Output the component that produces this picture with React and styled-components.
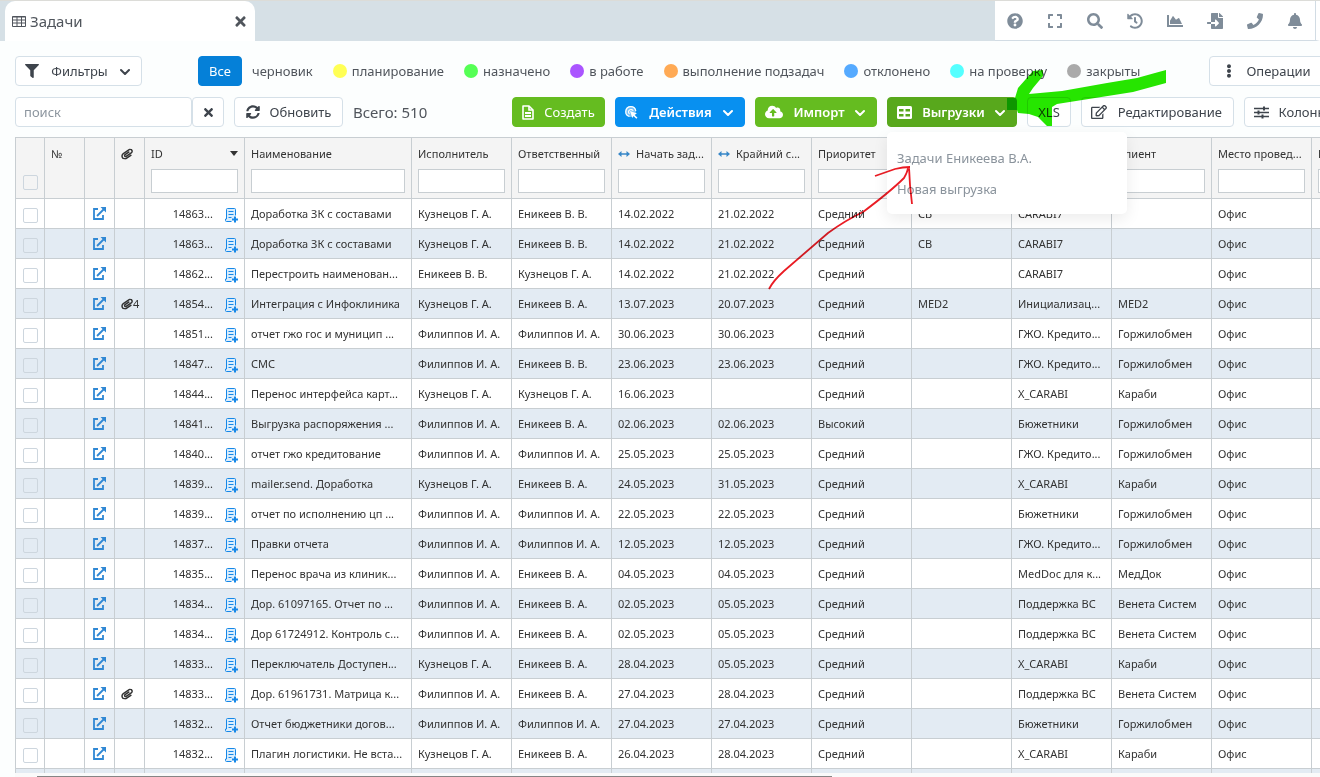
import React from "react";
import styled, { createGlobalStyle } from "styled-components";
import {
  FaTimes, FaFilter, FaSyncAlt, FaQuestionCircle, FaExpand, FaSearch,
  FaHistory, FaChartArea, FaFileImport, FaPhone, FaBell, FaEllipsisV,
  FaCloudUploadAlt, FaRegEdit, FaPaperclip,
} from "react-icons/fa";

const GlobalStyle = createGlobalStyle`
  * {
    box-sizing: border-box;
  }
  body {
    margin: 0;
    background: #fcfefe;
    color: #3e444c;
    font-family: "Noto Sans", "Open Sans", sans-serif;
    font-size: 13px;
  }
  button, input {
    font-family: inherit;
    font-size: inherit;
    color: inherit;
  }
  svg {
    flex: none;
  }
`;

const statuses = [
  { label: "планирование", color: "#ffff55" },
  { label: "назначено", color: "#55ff55" },
  { label: "в работе", color: "#aa55ff" },
  { label: "выполнение подзадач", color: "#ffaa55" },
  { label: "отклонено", color: "#55aaff" },
  { label: "на проверку", color: "#55ffff" },
  { label: "закрыты", color: "#aaaaaa" },
];

const columns = [
  { width: 29, kind: "check" },
  { width: 40, title: "№" },
  { width: 30 },
  { width: 30, kind: "clip" },
  { width: 100, title: "ID", filter: true, sorted: true },
  { width: 167, title: "Наименование", filter: true },
  { width: 100, title: "Исполнитель", filter: true },
  { width: 100, title: "Ответственный", filter: true },
  { width: 100, title: "Начать зад...", filter: true, arrows: true },
  { width: 100, title: "Крайний с...", filter: true, arrows: true },
  { width: 100, title: "Приоритет", filter: true },
  { width: 100, filter: true },
  { width: 100, filter: true },
  { width: 100, title: "Клиент", filter: true },
  { width: 100, title: "Место провед...", filter: true },
  { width: 100, title: "Инициатор", filter: true },
];

const K = "Кузнецов Г. А.";
const F = "Филиппов И. А.";
const EV = "Еникеев В. В.";
const EA = "Еникеев В. А.";
const MID = "Средний";

const rows = [
  ["14863...", "Доработка ЗК с составами", K, EV, "14.02.2022", "21.02.2022", MID, "СВ", "CARABI7", ""],
  ["14863...", "Доработка ЗК с составами", K, EV, "14.02.2022", "21.02.2022", MID, "СВ", "CARABI7", ""],
  ["14862...", "Перестроить наименован...", EV, K, "14.02.2022", "21.02.2022", MID, "", "CARABI7", ""],
  ["14854...", "Интеграция с Инфоклиника", K, EA, "13.07.2023", "20.07.2023", MID, "MED2", "Инициализац...", "MED2"],
  ["14851...", "отчет гжо гос и муницип ...", F, F, "30.06.2023", "30.06.2023", MID, "", "ГЖО. Кредито...", "Горжилобмен"],
  ["14847...", "СМС", F, EV, "23.06.2023", "23.06.2023", MID, "", "ГЖО. Кредито...", "Горжилобмен"],
  ["14844...", "Перенос интерфейса карт...", K, K, "16.06.2023", "", MID, "", "X_CARABI", "Караби"],
  ["14841...", "Выгрузка распоряжения ...", F, EA, "02.06.2023", "02.06.2023", "Высокий", "", "Бюжетники", "Горжилобмен"],
  ["14840...", "отчет гжо кредитование", F, F, "25.05.2023", "25.05.2023", MID, "", "ГЖО. Кредито...", "Горжилобмен"],
  ["14839...", "mailer.send. Доработка", K, EA, "24.05.2023", "31.05.2023", MID, "", "X_CARABI", "Караби"],
  ["14839...", "отчет по исполнению цп ...", F, F, "22.05.2023", "22.05.2023", MID, "", "Бюжетники", "Горжилобмен"],
  ["14837...", "Правки отчета", F, F, "12.05.2023", "12.05.2023", MID, "", "ГЖО. Кредито...", "Горжилобмен"],
  ["14835...", "Перенос врача из клиник...", F, EA, "04.05.2023", "04.05.2023", MID, "", "MedDoc для к...", "МедДок"],
  ["14834...", "Дор. 61097165. Отчет по ...", F, EA, "02.05.2023", "05.05.2023", MID, "", "Поддержка ВС", "Венета Систем"],
  ["14834...", "Дор 61724912. Контроль с...", F, EA, "02.05.2023", "05.05.2023", MID, "", "Поддержка ВС", "Венета Систем"],
  ["14833...", "Переключатель Доступен...", K, EA, "28.04.2023", "05.05.2023", MID, "", "X_CARABI", "Караби"],
  ["14833...", "Дор. 61961731. Матрица к...", F, EA, "27.04.2023", "28.04.2023", MID, "", "Поддержка ВС", "Венета Систем"],
  ["14832...", "Отчет бюджетники догов...", F, F, "27.04.2023", "27.04.2023", MID, "", "Бюжетники", "Горжилобмен"],
  ["14832...", "Плагин логистики. Не вста...", K, EA, "26.04.2023", "28.04.2023", MID, "", "X_CARABI", "Караби"],
];

const attachments = { 3: "4", 16: "" };

const Chevron = () => (
  <svg width="10" height="8" viewBox="0 0 10 8" fill="none" stroke="currentColor" strokeWidth="2">
    <path d="M1 3l4 4 4-4" strokeLinecap="round" strokeLinejoin="round" />
  </svg>
);

const TableIcon = () => (
  <svg width="14" height="11" viewBox="0 0 14 11" fill="none" stroke="currentColor">
    <path d="M.5 .5h13v10H.5z" />
    <path d="M.5 1h13M.5 4h13M.5 7h13M5 .5v10M9.500 .5v10" />
  </svg>
);

const DocIcon = () => (
  <svg width="12" height="15" viewBox="0 0 12 15" fill="none" stroke="currentColor" strokeWidth="1.600">
    <path d="M1 1h6l4 4v9H1z" strokeLinejoin="round" />
    <path d="M3 8h6M3 11h6" strokeWidth="2" />
    <path d="M7 1v4h4" />
  </svg>
);

const TargetIcon = () => (
  <svg width="13" height="13" viewBox="0 0 13 13" fill="none" stroke="currentColor">
    <circle cx="5.500" cy="5.500" r="5.500" fill="currentColor" fillOpacity="0.45" stroke="none" />
    <path d="M4.500 10.500A5 5 0 1 1 10.800 5" strokeWidth="1.200" />
    <path d="M4.500 8A2.500 2.500 0 1 1 8.200 4.800" strokeWidth="1.200" />
    <path d="M5 5l7 2.500-2.500 1.200 3 3-1.200 1-2.800-2.800L7.300 12z" fill="currentColor" stroke="none" />
  </svg>
);

const GridIcon = () => (
  <svg width="15" height="13" viewBox="0 0 15 13">
    <rect width="15" height="13" rx="1.500" fill="currentColor" />
    <path d="M2 3h4.500v2.500H2zM8.500 3H13v2.500H8.500zM2 8h4.500v2.500H2zM8.500 8H13v2.500H8.500z" fill="#58a81c" />
  </svg>
);

const SlidersIcon = () => (
  <svg width="15" height="13" viewBox="0 0 15 13" stroke="currentColor" fill="none">
    <path d="M0 2.500h15M0 6.500h15M0 10.500h15" strokeWidth="1.500" />
    <path d="M10 .5v4M4.500 4.500v4M8.500 8.500v4" strokeWidth="2" />
  </svg>
);

const OpenIcon = () => (
  <svg width="13" height="13" viewBox="0 0 13 13" fill="none" stroke="currentColor">
    <path d="M5 2H1v10h9V8" strokeWidth="1.800" />
    <path d="M4 9l7-7" strokeWidth="1.800" />
    <path d="M7.500 0H13v5.500z" fill="currentColor" stroke="none" />
  </svg>
);

const AddNoteIcon = () => (
  <svg width="13" height="15" viewBox="0 0 13 15" fill="none" stroke="currentColor">
    <path d="M10.500 7.500V1.500q0-1-1-1h-7q-1 0-1 1v9.500H.5v1.500q0 1 1 1h5" fill="#d9edfd" />
    <path d="M3.500 3.500h5M3.500 6.500h5M3.500 9.500h3" />
    <path d="M10 8.500v6M7 11.500h6" strokeWidth="2" />
  </svg>
);

const ArrowsIcon = () => (
  <svg width="12" height="8" viewBox="0 0 12 8" fill="#3787c8">
    <path d="M0 4l3.500-3v2.300h5V1L12 4 8.500 7V4.700h-5V7z" />
  </svg>
);

const Page = styled.div`
  position: relative;
  display: flex;
  flex-direction: column;
  height: 100vh;
  overflow: hidden;
`;

const TopBar = styled.header`
  display: flex;
  justify-content: space-between;
  height: 41px;
  padding-left: 5px;
  background: #d6e0e6;
  border-top: 1px solid #dcdcd8;
`;

const Tab = styled.div`
  display: flex;
  align-items: center;
  gap: 4px;
  width: 250px;
  padding: 0 8px 0 7px;
  background: #fff;
  border-radius: 10px 10px 0 0;
  font-size: 15px;
  color: #50555c;
  span {
    flex: 1;
  }
`;

const IconButton = styled.button`
  display: flex;
  align-items: center;
  justify-content: center;
  width: ${(p) => p.$width || 40}px;
  padding: 0;
  border: 0;
  background: none;
  color: ${(p) => p.$color || "#7f8c99"};
`;

const TopIcons = styled.nav`
  display: flex;
  background: #fff;
  border-bottom: 1px solid #d2dce4;
  border-right: 4px solid #fff;
  box-shadow: inset -1px 0 #d2dce4;
  padding-right: 1px;
`;

const StatusBar = styled.div`
  display: flex;
  align-items: center;
  height: 30px;
  margin-top: 15px;
  padding-left: 15px;
  white-space: nowrap;
`;

const ToolBar = styled(StatusBar)`
  margin-top: 11px;
`;

const Button = styled.button`
  display: flex;
  flex: none;
  align-items: center;
  justify-content: ${(p) => (p.$spread ? "space-between" : "center")};
  gap: 10px;
  width: ${(p) => p.$width}px;
  height: 30px;
  margin-right: ${(p) => p.$after || 0}px;
  padding: ${(p) => (p.$spread ? "0 11px 0 9px" : 0)};
  border: 1px solid ${(p) => p.$bg || "#d5e0e8"};
  border-radius: 4px;
  background: ${(p) => p.$bg || "#fff"};
  color: ${(p) => (p.$bg ? "#fff" : "#3e444c")};
  font-weight: ${(p) => (p.$strong ? 600 : 400)};
  white-space: nowrap;
`;

const StatusList = styled.div`
  display: flex;
  gap: 20px;
  margin-left: 10px;
`;

const Status = styled.a`
  display: flex;
  align-items: center;
  gap: 5px;
  color: #50555c;
  text-decoration: none;
`;

const Dot = styled.i`
  width: 14px;
  height: 14px;
  border-radius: 50%;
  background: ${(p) => p.$color};
`;

const PushRight = styled.div`
  margin-left: auto;
  margin-right: -${(p) => p.$over}px;
`;

const Search = styled.input`
  width: 177px;
  height: 30px;
  padding: 0 8px;
  border: 1px solid #d5e0e8;
  border-radius: 4px;
  background: #fff;
  &::placeholder {
    color: #8c959e;
    opacity: 1;
  }
`;

const Total = styled.span`
  flex: 1;
  font-size: 15px;
  color: #50555c;
`;

const MenuAnchor = styled.div`
  position: relative;
  margin-right: 10px;
`;

const Menu = styled.div`
  position: absolute;
  z-index: 2;
  top: 35px;
  left: 0;
  display: flex;
  flex-direction: column;
  width: 240px;
  padding: 11px 0 9px;
  border-radius: 5px;
  background: #fff;
  box-shadow: 0 5px 15px rgba(0, 0, 0, 0.08);
`;

const MenuItem = styled.a`
  padding: 0 10px;
  line-height: 31px;
  color: #8a939c;
  text-decoration: none;
`;

const TableWrap = styled.div`
  flex: 1;
  min-height: 0;
  margin: 10px 0 0 15px;
  overflow: hidden;
`;

const Table = styled.table`
  width: 1397px;
  table-layout: fixed;
  border-collapse: separate;
  border-spacing: 0;
  border-top: 1px solid #c8ced2;
  border-left: 1px solid #c8ced2;
  font-size: 11px;
  color: #333;
  th,
  td {
    padding: 0 6px;
    border-right: 1px solid #c8ced2;
    border-bottom: 1px solid #c8ced2;
    overflow: hidden;
    white-space: nowrap;
    text-align: left;
    font-weight: 400;
  }
  th {
    height: 61px;
    background: #f4f4f4;
    vertical-align: top;
  }
  td {
    height: 30px;
  }
  tbody tr {
    background: #fff;
  }
  tbody tr:nth-child(even) {
    background: #e3ebf3;
  }
`;

const HeadTitle = styled.div`
  display: flex;
  align-items: center;
  gap: 6px;
  height: 31px;
`;

const SortMark = styled.i`
  margin-left: auto;
  border: 4px solid transparent;
  border-top: 5px solid #333;
  border-bottom: 0;
`;

const FilterInput = styled.input`
  display: block;
  width: 100%;
  height: 24px;
  border: 1px solid #c8ced2;
  background: #fff;
`;

const Check = styled.input`
  display: block;
  appearance: none;
  width: 15px;
  height: 15px;
  margin: ${(p) => (p.$head ? 37 : 3)}px 0 0 1px;
  border: 1px solid #cdd6de;
  border-radius: 2px;
`;

const LinkIcon = styled.a`
  display: flex;
  justify-content: center;
  color: #3088d4;
`;

const Clip = styled(FaPaperclip)`
  transform: rotate(12deg);
`;

const ClipCell = styled.span`
  display: flex;
  align-items: center;
  margin-right: -4px;
`;

const IdCell = styled.span`
  display: flex;
  align-items: center;
  justify-content: flex-end;
  gap: 12px;
  height: 29px;
  a {
    display: flex;
    padding-top: 4px;
    color: #1688e8;
  }
`;

const ScrollTrack = styled.div`
  flex: none;
  height: 4px;
  margin-left: 15px;
  padding: 3px 488px 0 22px;
  background: #fafafa;
`;

const ScrollThumb = styled.div`
  height: 1px;
  background: #858585;
`;

const Marks = styled.svg`
  position: absolute;
  z-index: 3;
  top: 0;
  left: 0;
  pointer-events: none;
  mix-blend-mode: multiply;
`;

const HeadCell = ({ column }) => (
  <th>
    {column.kind === "check" ? (
      <Check type="checkbox" aria-label="Выбрать все" $head />
    ) : (
      <HeadTitle>
        {column.arrows && <ArrowsIcon />}
        {column.kind === "clip" && <Clip size={12} />}
        {column.title}
        {column.sorted && <SortMark />}
      </HeadTitle>
    )}
    {column.filter && <FilterInput aria-label={column.title || "Фильтр"} />}
  </th>
);

const Row = ({ row, index }) => {
  const [id, ...cells] = row;
  return (
    <tr>
      <td><Check type="checkbox" aria-label={id} /></td>
      <td />
      <td><LinkIcon href="#open" aria-label="Открыть"><OpenIcon /></LinkIcon></td>
      <td>
        {index in attachments && (
          <ClipCell><Clip size={12} />{attachments[index]}</ClipCell>
        )}
      </td>
      <td>
        <IdCell>
          {id}
          <a href="#add" aria-label="Добавить"><AddNoteIcon /></a>
        </IdCell>
      </td>
      {cells.map((cell, i) => <td key={i}>{cell}</td>)}
      <td>Офис</td>
      <td />
    </tr>
  );
};

const topIcons = [
  ["Помощь", FaQuestionCircle], ["Во весь экран", FaExpand], ["Поиск", FaSearch],
  ["История", FaHistory], ["Графики", FaChartArea], ["Загрузить", FaFileImport],
  ["Телефон", FaPhone], ["Уведомления", FaBell],
];

const App = () => {
  return (
    <Page>
      <GlobalStyle />
      <TopBar>
        <Tab>
          <TableIcon />
          <span>Задачи</span>
          <IconButton $width={14} $color="#50555c" aria-label="Закрыть"><FaTimes size={15} /></IconButton>
        </Tab>
        <TopIcons>
          {topIcons.map(([label, Icon]) => (
            <IconButton key={label} aria-label={label}><Icon size={16} /></IconButton>
          ))}
        </TopIcons>
      </TopBar>

      <StatusBar>
        <Button $width={127} $spread $after={56}><FaFilter size={14} />Фильтры<Chevron /></Button>
        <Button $width={44} $bg="#0580d8">Все</Button>
        <StatusList>
          <Status href="#draft">черновик</Status>
          {statuses.map((s) => (
            <Status href="#status" key={s.label}><Dot $color={s.color} />{s.label}</Status>
          ))}
        </StatusList>
        <PushRight $over={4}>
          <Button $width={115}><FaEllipsisV size={14} />Операции</Button>
        </PushRight>
      </StatusBar>

      <ToolBar>
        <Search placeholder="поиск" aria-label="поиск" />
        <Button $width={32} $after={10} aria-label="Очистить"><FaTimes size={13} /></Button>
        <Button $width={109} $after={10}><FaSyncAlt size={14} />Обновить</Button>
        <Total>Всего: 510</Total>
        <Button $width={93} $bg="#65bc20" $after={10}><DocIcon />Создать</Button>
        <Button $width={130} $bg="#0890f0" $spread $strong $after={10}><TargetIcon />Действия<Chevron /></Button>
        <Button $width={122} $bg="#65bc20" $spread $strong $after={10}><FaCloudUploadAlt size={18} />Импорт<Chevron /></Button>
        <MenuAnchor>
          <Button $width={130} $bg="#58a81c" $spread $strong><GridIcon />Выгрузки<Chevron /></Button>
          <Menu>
            <MenuItem href="#tasks">Задачи Еникеева В.А.</MenuItem>
            <MenuItem href="#new">Новая выгрузка</MenuItem>
          </Menu>
        </MenuAnchor>
        <Button $width={44} $after={10}>XLS</Button>
        <Button $width={153} $spread $after={10}><FaRegEdit size={16} />Редактирование</Button>
        <PushRight $over={22}>
          <Button $width={98}><SlidersIcon />Колонки</Button>
        </PushRight>
      </ToolBar>

      <TableWrap>
        <Table>
          <colgroup>
            {columns.map((c, i) => <col key={i} width={c.width} />)}
          </colgroup>
          <thead>
            <tr>{columns.map((c, i) => <HeadCell key={i} column={c} />)}</tr>
          </thead>
          <tbody>
            {rows.map((row, i) => <Row key={i} row={row} index={i} />)}
            <tr>{columns.map((c, i) => <td key={i} />)}</tr>
          </tbody>
        </Table>
      </TableWrap>
      <ScrollTrack><ScrollThumb /></ScrollTrack>

      <Marks width="1200" height="300" viewBox="0 0 1200 300">
        <path
          fill="#26e600"
          d="M1043 70L1033 71 1018 88 1015 98H1007V110H1017L1018 113 1029 114 1038 117 1047 126H1052V107L1057 104 1133 92 1166 83V70L1155 73 1137 78 1107 83 1062 91 1029 94 1033 88 1043 76z"
        />
        <path
          d="M769 289q4-8 15-18l44-38q18-13 35-21 28-21 41-34 4-7 4-11M875 176l20-7q8-2 15-2M909 167l1 18 2 19"
          fill="none"
          stroke="#ea1c24"
          strokeWidth="1.800"
        />
      </Marks>
    </Page>
  );
};

export default App;
